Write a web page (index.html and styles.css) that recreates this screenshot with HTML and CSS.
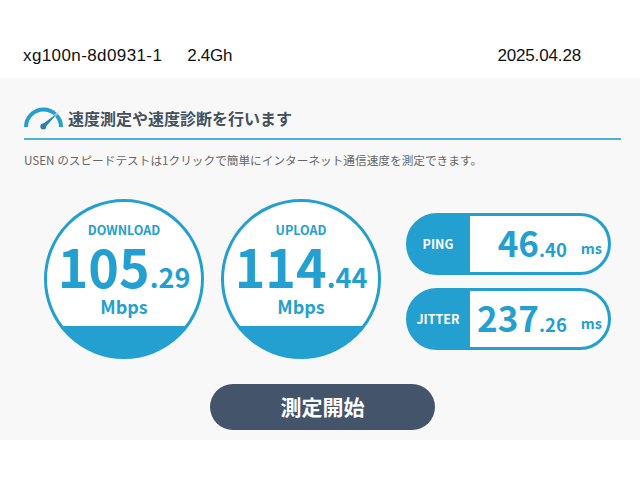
FILE: index.html
```html
<!DOCTYPE html>
<html lang="ja">
<head>
    <meta charset="UTF-8">
    <title>Speed Test</title>
    <link rel="stylesheet" href="styles.css">
</head>
<body>

    <header class="topbar">
        <div class="device">
            <span class="device-name">xg100n-8d0931-1</span>
            <span class="device-band">2.4Gh</span>
        </div>
        <div class="date">2025.04.28</div>
    </header>

    <main class="panel">
        <h1 class="title">
            <svg class="title-icon" width="40" height="24" viewBox="0 0 40 24">
                <path d="M2 21 A17.5 17.5 0 0 1 37 21" fill="none" stroke="#24a0d0" stroke-width="4"/>
                <path d="M17.5 18.5 L36.5 4.5 L21 22 Z" fill="#2c7fa8" stroke="#f8f8f8" stroke-width="0.8"/>
                <circle cx="19.3" cy="20.5" r="3" fill="#2c7fa8"/>
            </svg>
            <span>速度測定や速度診断を行います</span>
        </h1>
        <p class="lead">USEN のスピードテストは1クリックで簡単にインターネット通信速度を測定できます。</p>

        <div class="results">
            <div class="gauge">
                <div class="gauge-label">DOWNLOAD</div>
                <div class="gauge-value">105<small>.29</small></div>
                <div class="gauge-unit">Mbps</div>
            </div>
            <div class="gauge">
                <div class="gauge-label">UPLOAD</div>
                <div class="gauge-value">114<small>.44</small></div>
                <div class="gauge-unit">Mbps</div>
            </div>
            <div class="pills">
                <div class="pill">
                    <div class="pill-label">PING</div>
                    <div class="pill-value">46<small>.40</small><span class="pill-unit">ms</span></div>
                </div>
                <div class="pill">
                    <div class="pill-label">JITTER</div>
                    <div class="pill-value">237<small>.26</small><span class="pill-unit">ms</span></div>
                </div>
            </div>
        </div>

        <div class="actions">
            <button class="start">測定開始</button>
        </div>
    </main>

</body>
</html>
```

FILE: styles.css
```css
html, body {
    margin: 0;
    padding: 0;
    background-color: #fff;
}
body {
    width: 640px;
    height: 480px;
    overflow: hidden;
    font-family: "Noto Sans CJK JP", "Noto Sans", sans-serif;
}
.topbar {
    height: 78px;
    box-sizing: border-box;
    padding: 46px 59px 0 23px;
    display: flex;
    justify-content: space-between;
    font-family: "Liberation Sans", sans-serif;
    font-size: 17px;
    line-height: 20px;
    color: #111;
}
.device {
    display: flex;
    gap: 25px;
}
.device-name {
    letter-spacing: 0.4px;
}
.device-band {
    letter-spacing: -0.3px;
}
.date {
    letter-spacing: -0.15px;
}
.panel {
    height: 362px;
    box-sizing: border-box;
    padding: 28px 19px 0 24px;
    background-color: #f8f8f8;
}
.title {
    height: 34px;
    box-sizing: border-box;
    margin: 0;
    display: flex;
    align-items: flex-start;
    gap: 4px;
    border-bottom: 2px solid #4cb0d8;
    font-size: 16px;
    line-height: 24px;
    font-weight: 700;
    color: #44505c;
}
.title-icon {
    flex: none;
}
.lead {
    margin: 12px 0 0;
    font-size: 11.67px;
    line-height: 16px;
    color: #666;
}
.results {
    display: flex;
    margin: 31px 0 0 20px;
    gap: 17px;
}
.gauge {
    width: 160px;
    height: 160px;
    box-sizing: border-box;
    border: 3px solid #24a0d0;
    border-radius: 50%;
    /* the blue band at the bottom is the reading's base */
    background: linear-gradient(#fff 124px, #24a0d0 124px);
    display: flex;
    flex-direction: column;
    align-items: center;
    color: #24a0d0;
    font-weight: 700;
}
.gauge-label {
    margin-top: 20px;
    font-size: 12.5px;
    line-height: 16px;
}
.gauge-value {
    margin-top: 10px;
    font-size: 52px;
    line-height: 36px;
    white-space: nowrap;
}
.gauge-value small {
    font-size: 27px;
}
.gauge-unit {
    font-size: 18px;
    line-height: 22px;
}
.pills {
    display: flex;
    flex-direction: column;
    gap: 13px;
    margin: 14px 0 0 8px;
}
.pill {
    width: 205px;
    height: 62px;
    box-sizing: border-box;
    border: 3px solid #24a0d0;
    border-radius: 31px;
    background: linear-gradient(90deg, #24a0d0 61px, #fff 61px);
    display: flex;
    color: #24a0d0;
}
.pill-label {
    width: 58px;
    padding-right: 3px;
    flex: none;
    color: #fff;
    font-size: 12.5px;
    font-weight: 700;
    line-height: 56px;
    text-align: center;
}
.pill-value {
    flex: 1;
    display: flex;
    justify-content: flex-end;
    align-items: baseline;
    padding-right: 6px;
    font-size: 35px;
    line-height: 52px;
    font-weight: 700;
}
.pill-value small {
    font-size: 18.5px;
}
.pill-unit {
    margin-left: 14px;
    font-size: 14.5px;
    transform: translateY(-3px);
}
.actions {
    display: flex;
    justify-content: center;
    margin-top: 25px;
}
.start {
    width: 225px;
    height: 46px;
    padding: 0 0 2px;
    border: none;
    border-radius: 23px;
    background-color: #44546a;
    color: #fff;
    font-family: inherit;
    font-size: 21px;
    font-weight: 700;
}
```
